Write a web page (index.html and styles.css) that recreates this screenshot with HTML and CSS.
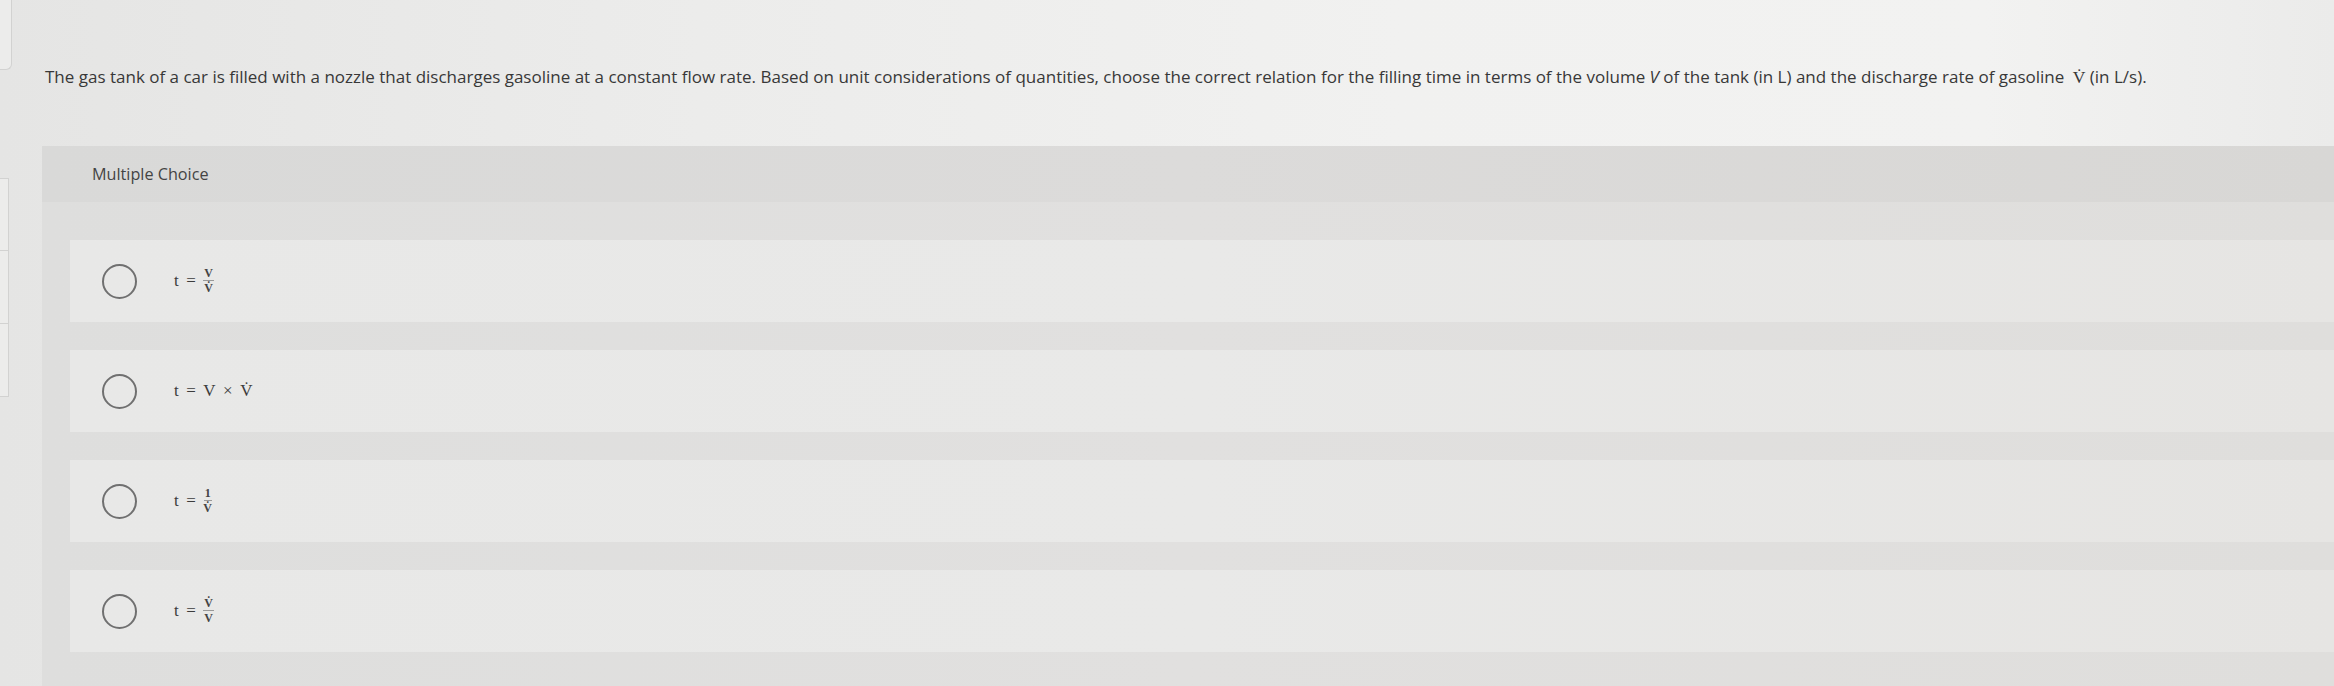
FILE: index.html
```html
<!DOCTYPE html>
<html lang="en">
<head>
<meta charset="utf-8">
<title>Multiple Choice</title>
<link rel="stylesheet" href="styles.css">
</head>
<body>
<div class="page">
  <aside class="rail">
    <div class="rail-tab rail-top"></div>
    <div class="rail-stack">
      <div class="rail-tab"></div>
      <div class="rail-tab"></div>
      <div class="rail-tab"></div>
    </div>
  </aside>
  <main class="main">
    <p class="question">The gas tank of a car is filled with a nozzle that discharges gasoline at a constant flow rate. Based on unit considerations of quantities, choose the correct relation for the filling time in terms of the volume <i class="var">V</i> of the tank (in L) and the discharge rate of gasoline <span class="math-inline">V&#x307;</span> (in L/s).</p>
    <section class="panel">
      <header class="panel-head">Multiple Choice</header>
      <div class="panel-body">
        <label class="option">
          <span class="radio"></span>
          <span class="formula">t <span class="op">=</span> <span class="frac"><span class="num">V</span><span class="den">V&#x307;</span></span></span>
        </label>
        <label class="option">
          <span class="radio"></span>
          <span class="formula">t <span class="op">=</span> V <span class="op">×</span> V&#x307;</span>
        </label>
        <label class="option">
          <span class="radio"></span>
          <span class="formula">t <span class="op">=</span> <span class="frac"><span class="num">1</span><span class="den">V&#x307;</span></span></span>
        </label>
        <label class="option">
          <span class="radio"></span>
          <span class="formula">t <span class="op">=</span> <span class="frac"><span class="num">V&#x307;</span><span class="den">V</span></span></span>
        </label>
      </div>
    </section>
  </main>
</div>
</body>
</html>
```
FILE: styles.css
```css
html, body {
  margin: 0;
  padding: 0;
  height: 100%;
  overflow: hidden;
}
body {
  background: linear-gradient(90deg, #e5e5e4 0%, #ececeb 30%, #f1f1f0 60%, #f2f2f1 85%, #ebebea 100%);
  font-family: "Open Sans", "Liberation Sans", sans-serif;
  color: #3a3a3a;
}
.page {
  display: flex;
  min-height: 686px;
}
.rail {
  width: 9px;
  flex: none;
  display: flex;
  flex-direction: column;
}
.rail-tab {
  border: 1px solid #d2d2d1;
  border-left: none;
  background: #ececeb;
  height: 72px;
  box-sizing: border-box;
}
.rail-top {
  height: 70px;
  width: 12px;
  border-top: none;
  border-bottom-right-radius: 6px;
}
.rail-stack {
  margin-top: 108px;
  display: flex;
  flex-direction: column;
}
.rail-stack .rail-tab + .rail-tab {
  border-top: none;
}
.rail-stack .rail-tab {
  height: 73px;
}
.main {
  flex: 1;
  padding: 65px 0 0 33px;
  min-width: 0;
}
.question {
  margin: 0 0 57px 3px;
  font-size: 17px;
  line-height: 24px;
  white-space: nowrap;
  color: #383838;
}
.var {
  font-style: italic;
}
.math-inline {
  font-family: "Liberation Serif", "Times New Roman", serif;
  font-size: 17.5px;
  margin-left: 4px;
}
.panel {
  background: linear-gradient(90deg, #dededd 0%, #e1e0df 50%, #dfdedc 100%);
  padding-bottom: 60px;
}
.panel-head {
  height: 56px;
  display: flex;
  align-items: center;
  padding-left: 50px;
  font-size: 16.2px;
  color: #444;
  background: linear-gradient(90deg, #d9d9d8 0%, #dcdbda 50%, #d8d7d5 100%);
}
.panel-body {
  padding: 38px 0 0 28px;
  display: flex;
  flex-direction: column;
  gap: 28px;
}
.option {
  height: 82px;
  display: flex;
  align-items: center;
  padding-left: 32px;
  background: linear-gradient(90deg, #e8e8e7 0%, #e9e9e8 50%, #e6e5e3 100%);
}
.radio {
  width: 35px;
  height: 35px;
  box-sizing: border-box;
  border: 2.5px solid #707070;
  border-radius: 50%;
  flex: none;
}
.formula {
  margin-left: 37px;
  font-family: "Liberation Serif", "Times New Roman", serif;
  font-size: 17px;
  color: #3c3c3c;
  display: inline-flex;
  align-items: center;
  gap: 7.5px;
  white-space: nowrap;
}
.frac {
  display: inline-flex;
  flex-direction: column;
  align-items: center;
  font-size: 12px;
  line-height: 11px;
  font-weight: bold;
  color: #444;
}
.num {
  padding: 0 1px 1px;
  border-bottom: 1px solid #999;
}
.den {
  padding-top: 2px;
}
```
